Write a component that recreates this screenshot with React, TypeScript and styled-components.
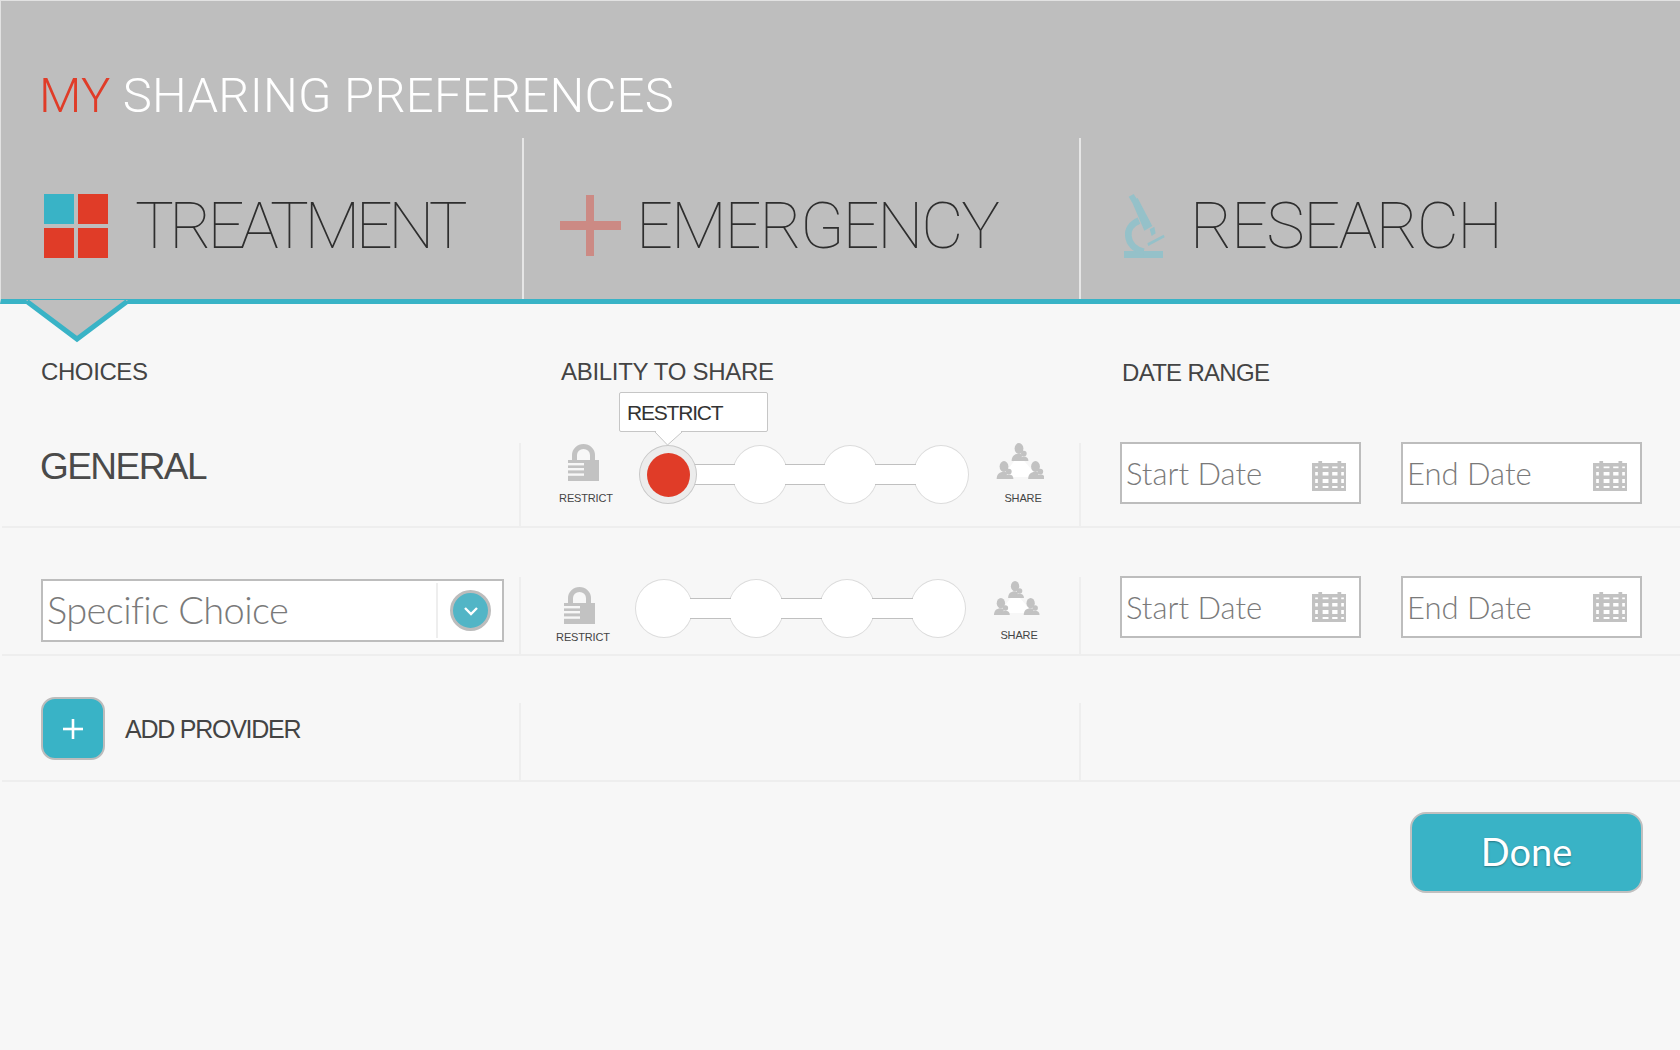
import React from "react";
import styled, { createGlobalStyle } from "styled-components";

const Global = createGlobalStyle`
  html, body { margin: 0; padding: 0; background: #f7f7f7; }
  * { box-sizing: border-box; }
`;

const HELV = `"Liberation Sans", Arial, sans-serif`;
const THIN = `Roboto, "Liberation Sans", sans-serif`;
const GILL = `Lato, "Open Sans", sans-serif`;
const TEAL = "#39b3c6";
const RED = "#e03c28";
const LINE = "#eeeeee";
const FIELD = "#bdbdbd";
const ICON = "#c2c2c2";

const Page = styled.div`
  width: 1680px;
  height: 1050px;
  overflow: hidden;
  position: relative;
  background: #f7f7f7;
  font-family: ${HELV};
`;

const Header = styled.header`
  position: relative;
  height: 304px;
  background: #bebebe;
  border-top: 1px solid #e2e2e2;
  border-left: 1px solid #e2e2e2;
  border-bottom: 5px solid ${TEAL};
  display: flex;
  flex-direction: column;
`;

const Title = styled.h1`
  margin: 0;
  height: 137px;
  padding: 70px 0 0 38px;
  font: 300 49px/1 ${THIN};
  letter-spacing: 0.25px;
  color: #ffffff;
  white-space: nowrap;
`;

const TitleAccent = styled.span`
  color: ${RED};
`;

const Tabs = styled.nav`
  flex: 1;
  display: flex;
`;

const Tab = styled.div<{ $w?: number; $pad: number }>`
  ${(p) => (p.$w ? `width: ${p.$w}px;` : "flex: 1;")}
  display: flex;
  align-items: center;
  padding: 14px 0 0 ${(p) => p.$pad}px;
  ${(p) => (p.$w ? "border-right: 2px solid #e6e6e6;" : "")}
`;

const TabLabel = styled.span<{ $ls: number; $ml: number }>`
  font: 100 65px/1 ${THIN};
  letter-spacing: ${(p) => p.$ls}px;
  margin-left: ${(p) => p.$ml}px;
  padding-top: 2px;
  color: #2e2e2e;
  white-space: nowrap;
`;

const FourSquares = styled.div`
  width: 64px;
  height: 64px;
  display: grid;
  grid-template-columns: 30px 30px;
  grid-template-rows: 30px 30px;
  gap: 4px;
`;

const Square = styled.div<{ $c: string }>`
  background: ${(p) => p.$c};
`;

const Notch = styled.svg`
  position: absolute;
  left: -1px;
  top: 297px;
  overflow: visible;
`;

const Headings = styled.div`
  display: grid;
  grid-template-columns: 517px 560px 1fr;
  margin-left: 2px;
  height: 139px;
`;

const Heading = styled.h2<{ $pl: number; $pt: number; $ls: number }>`
  margin: 0;
  padding: ${(p) => p.$pt}px 0 0 ${(p) => p.$pl}px;
  font: 400 24px/28px ${HELV};
  letter-spacing: ${(p) => p.$ls}px;
  color: #444444;
`;

const Row = styled.section<{ $h: number; $mt: number }>`
  display: grid;
  grid-template-columns: 517px 560px 1fr;
  margin: ${(p) => p.$mt}px 0 0 2px;
  height: ${(p) => p.$h}px;
  border-bottom: 2px solid ${LINE};
`;

const ChoiceCell = styled.div<{ $pt: number }>`
  padding: ${(p) => p.$pt}px 0 0 39px;
  display: flex;
  align-items: flex-start;
`;

const AbilityCell = styled.div<{ $pl?: number }>`
  border-left: 2px solid ${LINE};
  display: flex;
  align-items: flex-start;
  padding-left: ${(p) => p.$pl ?? 0}px;
`;

const DateCell = styled.div`
  border-left: 2px solid ${LINE};
  display: flex;
  gap: 40px;
  padding-left: 39px;
  align-items: flex-start;
`;

const GeneralLabel = styled.div`
  font: 400 37px/47px ${HELV};
  letter-spacing: -1.55px;
  margin-left: -1px;
  color: #4a4a4a;
`;

const Select = styled.div`
  width: 463px;
  height: 63px;
  background: #fff;
  border: 2px solid ${FIELD};
  display: flex;
  align-items: center;
  padding: 0 11px 0 4px;
`;

const SelectText = styled.span`
  flex: 1;
  font: 300 38px/1 ${GILL};
  letter-spacing: -0.6px;
  color: #7a7a7a;
  padding-bottom: 4px;
`;

const SelectDivider = styled.span`
  width: 2px;
  height: 55px;
  background: ${LINE};
  margin-right: 12px;
`;

const RoundButton = styled.span`
  width: 41px;
  height: 41px;
  border-radius: 50%;
  background: #52b5c6;
  border: 3px solid #bcbcbc;
  display: flex;
  align-items: center;
  justify-content: center;
`;

const ScaleEnd = styled.div<{ $w: number; $mt: number; $ml?: number }>`
  width: ${(p) => p.$w}px;
  margin: ${(p) => p.$mt}px 0 0 ${(p) => p.$ml ?? 0}px;
  display: flex;
  flex-direction: column;
  align-items: center;
`;

const ScaleLabel = styled.span<{ $mt: number }>`
  margin-top: ${(p) => p.$mt}px;
  font: 400 11px/14px ${HELV};
  letter-spacing: -0.15px;
  color: #444;
`;

const LockGlyph = styled.svg<{ $mr: number }>`
  margin-right: ${(p) => p.$mr}px;
`;

const ShareGlyph = styled.svg`
  margin-right: 6px;
`;

const Slider = styled.div<{ $ml: number; $w: number }>`
  position: relative;
  width: ${(p) => p.$w}px;
  height: 59px;
  margin: 2px 0 0 ${(p) => p.$ml}px;
  display: flex;
  align-items: center;
`;

const Dot = styled.span<{ $on?: boolean }>`
  flex: none;
  width: 56px;
  height: 59px;
  border-radius: 50%;
  background: ${(p) => (p.$on ? "#ececec" : "#ffffff")};
  border: 1px solid ${(p) => (p.$on ? "#c8c8c8" : "#dcdcdc")};
  display: flex;
  align-items: center;
  justify-content: center;
  position: relative;
  z-index: ${(p) => (p.$on ? 3 : 1)};
  &:first-child { width: 58px; }
`;

const DotFill = styled.span`
  width: 43px;
  height: 44px;
  border-radius: 50%;
  background: ${RED};
`;

const Track = styled.span`
  flex: 1;
  height: 21px;
  margin: 0 -3px;
  background: #fff;
  border-top: 1px solid #c0c0c0;
  border-bottom: 1px solid #c0c0c0;
  position: relative;
  z-index: 2;
`;

const Tooltip = styled.div`
  position: absolute;
  z-index: 4;
  left: -20px;
  top: -53px;
  width: 149px;
  height: 40px;
  background: #fff;
  border: 1px solid #c6c6c6;
  border-radius: 2px;
  padding-left: 7px;
  font: 400 21px/39px ${HELV};
  letter-spacing: -1.2px;
  color: #333;
`;

const TooltipTail = styled.svg`
  position: absolute;
  left: 34px;
  top: 38px;
`;

const DateField = styled.div`
  width: 241px;
  height: 62px;
  margin-top: -1px;
  background: #fff;
  border: 2px solid ${FIELD};
  display: flex;
  align-items: center;
  justify-content: space-between;
  padding: 0 13px 0 4px;
`;

const DateText = styled.span`
  font: 300 31px/1 ${GILL};
  color: #7a7a7a;
  padding-top: 1px;
`;

const CalendarGlyph = styled.svg<{ $mt: number }>`
  margin-top: ${(p) => p.$mt}px;
`;

const AddProvider = styled.div`
  margin-top: -6px;
  display: flex;
  align-items: center;
  gap: 20px;
`;

const AddButton = styled.span`
  width: 64px;
  height: 63px;
  border-radius: 14px;
  background: ${TEAL};
  border: 2px solid #bcbcbc;
  display: flex;
  align-items: center;
  justify-content: center;
`;

const AddLabel = styled.span`
  font: 400 25px/1 ${HELV};
  letter-spacing: -1.25px;
  color: #444;
  padding-top: 2px;
`;

const Footer = styled.footer`
  display: flex;
  justify-content: flex-end;
  padding: 30px 37px 0 0;
`;

const DoneButton = styled.button`
  width: 233px;
  height: 81px;
  border-radius: 16px;
  background: ${TEAL};
  border: 2px solid #c0c0c0;
  color: #fff;
  font: 400 38px/1 ${GILL};
  text-shadow: 0 1px 2px rgba(0, 0, 0, 0.35);
  padding: 0 0 4px;
`;

const Microscope = () => (
  <svg width="60" height="80" viewBox="0 0 180 240">
    <g fill="#95c1c9">
      <polygon points="41,32 56,24 66,40 52,50" />
      <polygon points="50,46 68,36 112,120 88,134" />
      <polygon points="104,130 118,122 122,142 110,150" />
      <rect x="27" y="195" width="117" height="21" />
      <polygon points="97,172 146,146 149,154 100,180" />
    </g>
    <path d="M72 104 C48 114 38 132 40 150 C42 172 58 190 86 197" fill="none" stroke="#95c1c9" strokeWidth="20" />
  </svg>
);

const Plus = () => (
  <svg width="61" height="61" viewBox="0 0 61 61">
    <rect x="26" y="0" width="8" height="61" fill="#cc8a84" />
    <rect x="0" y="26" width="61" height="9" fill="#cc8a84" />
  </svg>
);

const Lock = ({ mr }: { mr: number }) => (
  <LockGlyph $mr={mr} width="31" height="37" viewBox="0 0 31 37">
    <path d="M6.5 17 V11 a9 8.5 0 0 1 18 0 V17" fill="none" stroke={ICON} strokeWidth="5" />
    <rect x="0" y="16" width="31" height="21" fill={ICON} />
    <rect x="0" y="19" width="16" height="2.4" fill="#f7f7f7" />
    <rect x="0" y="24" width="16" height="2.4" fill="#f7f7f7" />
    <rect x="0" y="29.4" width="16" height="2.4" fill="#f7f7f7" />
  </LockGlyph>
);

const Person = ({ x, y }: { x: number; y: number }) => (
  <g transform={`translate(${x} ${y}) scale(1.05)`} fill={ICON}>
    <ellipse cx="0" cy="0" rx="4.2" ry="5.2" />
    <path d="M-7 12 C-7 7 -4 5 0 5 C2 5 3 6 3 6 L2 12 Z" />
    <circle cx="4.6" cy="4.8" r="2.7" />
    <path d="M0 12 C0 9 2 7.6 4.6 7.6 C7.2 7.6 9 9 9 12 Z" />
  </g>
);

const Share = ({ w, h }: { w: number; h: number }) => (
  <ShareGlyph width={w} height={h} viewBox="0 0 48 36">
    <polygon points="23,12 6,34 42,34" fill="#fff" />
    <Person x={23} y={5.5} />
    <Person x={8} y={23.5} />
    <Person x={39.5} y={23.5} />
  </ShareGlyph>
);

const Calendar = ({ mt }: { mt: number }) => (
  <CalendarGlyph $mt={mt} width="34" height="30" viewBox="0 0 32 30" preserveAspectRatio="none">
    <rect x="0" y="2" width="32" height="28" fill={ICON} />
    <rect x="6" y="0" width="3.5" height="3" fill={ICON} />
    <rect x="24" y="0" width="3.5" height="3" fill={ICON} />
    {[
      [5.5, 1.7],
      [11, 3.5],
      [18, 4],
      [25, 2],
    ].map(([y, hh]) =>
      [
        [3, 2.5],
        [10, 5.5],
        [19, 5],
        [27.5, 2.5],
      ].map(([x, ww]) => <rect key={`${x}-${y}`} x={x} y={y} width={ww} height={hh} fill="#fff" />)
    )}
  </CalendarGlyph>
);

const Chevron = () => (
  <svg width="16" height="10" viewBox="0 0 16 10">
    <path d="M2 2 L8 8 L14 2" fill="none" stroke="#fff" strokeWidth="2.4" />
  </svg>
);

const AddGlyph = () => (
  <svg width="20" height="20" viewBox="0 0 20 20">
    <rect x="8.7" y="0" width="2.6" height="20" fill="#fff" />
    <rect x="0" y="8.7" width="20" height="2.6" fill="#fff" />
  </svg>
);

const Scale = ({ ml, w, on }: { ml: number; w: number; on?: boolean }) => (
  <Slider $ml={ml} $w={w}>
    <Dot $on={on}>{on && <DotFill />}</Dot>
    <Track />
    <Dot />
    <Track />
    <Dot />
    <Track />
    <Dot />
    {on && (
      <Tooltip>
        RESTRICT
        <TooltipTail width="30" height="16" viewBox="0 0 30 16">
          <path d="M1 1 L13.5 14 L28 1" fill="#fff" stroke="#c6c6c6" strokeWidth="1" />
          <rect x="2" y="0" width="25" height="1.4" fill="#fff" />
        </TooltipTail>
      </Tooltip>
    )}
  </Slider>
);

const Dates = ({ mt }: { mt: number }) => (
  <DateCell>
    <DateField>
      <DateText>Start Date</DateText>
      <Calendar mt={mt} />
    </DateField>
    <DateField>
      <DateText>End Date</DateText>
      <Calendar mt={mt} />
    </DateField>
  </DateCell>
);

export default function App() {
  return (
    <Page>
      <Global />
      <Header>
        <Title>
          <TitleAccent>MY</TitleAccent> SHARING PREFERENCES
        </Title>
        <Tabs>
          <Tab $w={523} $pad={43}>
            <FourSquares>
              <Square $c={TEAL} />
              <Square $c={RED} />
              <Square $c={RED} />
              <Square $c={RED} />
            </FourSquares>
            <TabLabel $ls={-4.5} $ml={27}>TREATMENT</TabLabel>
          </Tab>
          <Tab $w={557} $pad={36}>
            <Plus />
            <TabLabel $ls={-2.1} $ml={15}>EMERGENCY</TabLabel>
          </Tab>
          <Tab $pad={34}>
            <Microscope />
            <TabLabel $ls={-1.6} $ml={15}>RESEARCH</TabLabel>
          </Tab>
        </Tabs>
        <Notch width="110" height="50" viewBox="0 0 110 50">
          <polygon points="26,2 128,2 77,42" fill="#bebebe" />
          <polyline points="27,3.5 77,41 127,3.5" fill="none" stroke={TEAL} strokeWidth="5" />
        </Notch>
      </Header>
      <Headings>
        <Heading $pl={39} $pt={54} $ls={-0.4}>CHOICES</Heading>
        <Heading $pl={42} $pt={54} $ls={-0.3}>ABILITY TO SHARE</Heading>
        <Heading $pl={43} $pt={55} $ls={-0.7}>DATE RANGE</Heading>
      </Headings>
      <Row $h={85} $mt={0}>
        <ChoiceCell $pt={0}>
          <GeneralLabel>GENERAL</GeneralLabel>
        </ChoiceCell>
        <AbilityCell $pl={35}>
          <ScaleEnd $w={60} $mt={1}>
            <Lock mr={6} />
            <ScaleLabel $mt={10}>RESTRICT</ScaleLabel>
          </ScaleEnd>
          <Scale ml={23} w={330} on />
          <ScaleEnd $w={70} $mt={0} $ml={19}>
            <Share w={48} h={36} />
            <ScaleLabel $mt={12}>SHARE</ScaleLabel>
          </ScaleEnd>
        </AbilityCell>
        <Dates mt={6} />
      </Row>
      <Row $h={79} $mt={49}>
        <ChoiceCell $pt={2}>
          <Select>
            <SelectText>Specific Choice</SelectText>
            <SelectDivider />
            <RoundButton>
              <Chevron />
            </RoundButton>
          </Select>
        </ChoiceCell>
        <AbilityCell $pl={32}>
          <ScaleEnd $w={60} $mt={10}>
            <Lock mr={8} />
            <ScaleLabel $mt={6}>RESTRICT</ScaleLabel>
          </ScaleEnd>
          <Scale ml={22} w={331} />
          <ScaleEnd $w={70} $mt={4} $ml={18}>
            <Share w={48} h={34} />
            <ScaleLabel $mt={13}>SHARE</ScaleLabel>
          </ScaleEnd>
        </AbilityCell>
        <Dates mt={0} />
      </Row>
      <Row $h={79} $mt={47}>
        <ChoiceCell $pt={0}>
          <AddProvider>
            <AddButton>
              <AddGlyph />
            </AddButton>
            <AddLabel>ADD PROVIDER</AddLabel>
          </AddProvider>
        </ChoiceCell>
        <AbilityCell />
        <DateCell />
      </Row>
      <Footer>
        <DoneButton>Done</DoneButton>
      </Footer>
    </Page>
  );
}
